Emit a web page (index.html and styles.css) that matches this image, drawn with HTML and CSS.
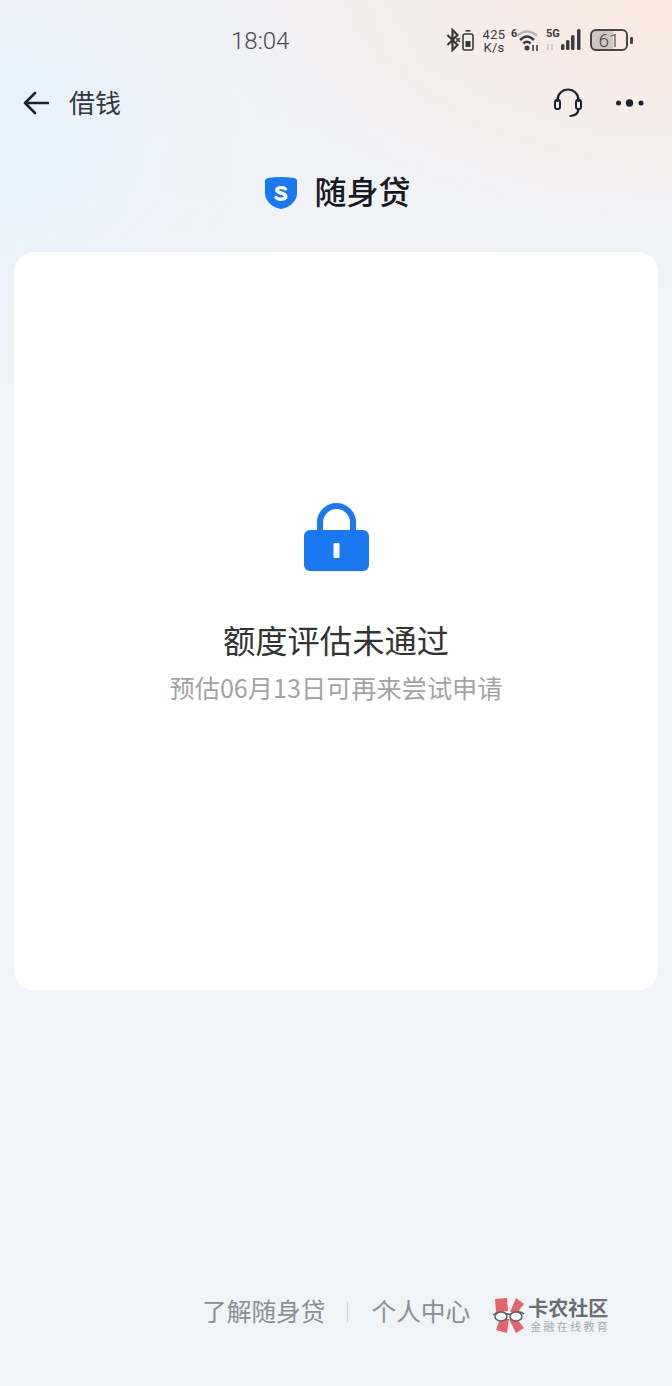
FILE: index.html
```html
<!DOCTYPE html>
<html lang="zh">
<head>
<meta charset="utf-8">
<title>借钱</title>
<link rel="stylesheet" href="styles.css">
</head>
<body>
<div class="page">
  <div class="status">
    <span class="time">18:04</span>
    <div class="status-icons">
      <svg class="ic-bt" width="28" height="24" viewBox="0 0 28 24"><path d="M1.500 7l10 10-5 5V2l5 5-10 10" fill="none" stroke="#3a3a3c" stroke-width="2.200"/><path d="M10 10l4 4M14 10l-4 4" stroke="#3a3a3c" stroke-width="1.500"/><rect x="17" y="6" width="10" height="16" rx="2" fill="none" stroke="#3a3a3c" stroke-width="1.600"/><rect x="19.500" y="2" width="5" height="1.600" fill="#3a3a3c"/><rect x="19.500" y="13" width="5" height="6" fill="#3a3a3c"/></svg>
      <div class="speed"><span>425</span><span>K/s</span></div>
      <span class="wifi-num">6</span>
      <svg class="ic-wifi" width="25" height="24" viewBox="0 0 25 24"><path d="M1 8Q11-1 21 8" fill="none" stroke="#b5b3b3" stroke-width="2.500"/><path d="M4 12Q11 5 18 12" fill="none" stroke="#3a3a3c" stroke-width="2.500"/><path d="M7.500 15.500Q11 12 14.500 15.500" fill="none" stroke="#3a3a3c" stroke-width="2.500"/><circle cx="11" cy="20" r="2.500" fill="#3a3a3c"/><path d="M17 17v6M21 17v6" stroke="#3a3a3c" stroke-width="1.500"/></svg>
      <div class="signal">
        <span class="five-g">5G</span>
        <svg class="ic-bars" width="36" height="24" viewBox="0 0 36 24"><path d="M2 16v6M6 16v6" stroke="#b5b3b3" stroke-width="1.200"/><rect x="15" y="16" width="3.500" height="6" rx="1.500" fill="#3a3a3c"/><rect x="20" y="12" width="3.500" height="10" rx="1.500" fill="#3a3a3c"/><rect x="25" y="7" width="3.500" height="15" rx="1.500" fill="#3a3a3c"/><rect x="31" y="1" width="3.500" height="21" rx="1.500" fill="#3a3a3c"/></svg>
      </div>
      <div class="battery"><div class="battery-body"><span>61</span></div><i class="battery-tip"></i></div>
    </div>
  </div>

  <div class="nav">
    <svg class="back" width="26" height="24" viewBox="0 0 26 24"><path d="M25 12H2M12 2L2 12l10 10" fill="none" stroke="#1c2230" stroke-width="2.600" stroke-linecap="round" stroke-linejoin="round"/></svg>
    <span class="nav-title">借钱</span>
    <svg class="headset" width="30" height="30" viewBox="0 0 30 30"><path d="M4.500 14V12a10.500 10.500 0 0 1 21 0v2" fill="none" stroke="#1c2230" stroke-width="2.200"/><rect x="2" y="12" width="5" height="9" rx="2" fill="none" stroke="#1c2230" stroke-width="2"/><rect x="23" y="12" width="5" height="9" rx="2" fill="none" stroke="#1c2230" stroke-width="2"/><path d="M25.500 21c0 4-3 6.500-8 7" fill="none" stroke="#1c2230" stroke-width="2.200" stroke-linecap="round"/></svg>
    <svg class="more" width="30" height="10" viewBox="0 0 30 10"><circle cx="3.500" cy="5" r="2.500" fill="#1c2230"/><circle cx="14.500" cy="5" r="3.700" fill="#1c2230"/><circle cx="26" cy="5" r="2.500" fill="#1c2230"/></svg>
  </div>

  <div class="brand">
    <svg class="shield" width="34" height="34" viewBox="0 0 34 34"><path d="M1 5Q1 2.500 4 2 17 0 30 2 33 2.500 33 5V17C33 26 25 31.500 17 33 9 31.500 1 26 1 17Z" fill="#1a78f2"/><path d="M21.500 13C20 11 13 11 12.800 14.200 12.600 17.500 22 16.500 21.800 20.500 21.500 24 14 23.800 12 21.500" fill="none" stroke="#fff" stroke-width="3.400" stroke-linecap="round"/></svg>
    <span class="brand-name">随身贷</span>
  </div>

  <main class="card">
    <svg class="lock" width="65" height="68" viewBox="0 0 65 68"><path d="M16 30V19.500a16.500 16.500 0 0 1 33 0V30" fill="none" stroke="#1a78f2" stroke-width="6"/><rect x="0" y="27" width="65" height="41" rx="6" fill="#1a78f2"/><rect x="29.500" y="40" width="6" height="15" rx="1" fill="#fff"/></svg>
    <h1 class="card-title">额度评估未通过</h1>
    <p class="card-sub">预估06月13日可再来尝试申请</p>
  </main>

  <footer class="footer">
    <span class="link">了解随身贷</span>
    <i class="divider"></i>
    <span class="link">个人中心</span>
    <div class="logo">
      <svg width="33" height="36" viewBox="0 0 33 36"><path d="M3 2 15 1 16 14 4 15Z" fill="#e4646c"/><path d="M18 15 24 1 32 7 25 16Z" fill="#e4646c"/><path d="M8 22H17L15 36 4 33Z" fill="#e4646c"/><path d="M17 22H25L32 31 24 36Z" fill="#e4646c"/><path d="M1 18Q7 13 14 16.500 17 18 20 16.500 27 13 32 17" fill="none" stroke="#5f6266" stroke-width="1.500"/><ellipse cx="9" cy="19.500" rx="6" ry="4.500" fill="#f6f6f8" stroke="#5f6266" stroke-width="1.500"/><ellipse cx="24" cy="19.500" rx="6" ry="4.500" fill="#f6f6f8" stroke="#5f6266" stroke-width="1.500"/></svg>
      <div class="logo-text"><b>卡农社区</b><small>金融在线教育</small></div>
    </div>
  </footer>
</div>
</body>
</html>
```
FILE: styles.css
```css
* { box-sizing: border-box; margin: 0; padding: 0; }
html, body { width: 672px; height: 1386px; overflow: hidden; }
body {
  font-family: "Noto Sans CJK SC", "Noto Sans", sans-serif;
  background: #f0f3f8;
}
.page {
  width: 672px;
  height: 1386px;
  display: flex;
  flex-direction: column;
  background:
    radial-gradient(420px 240px at 672px 0, #fbe9e0 0%, rgba(251,233,224,0) 100%),
    radial-gradient(300px 260px at 0 130px, #e6f3fd 0%, rgba(230,243,253,0) 100%),
    linear-gradient(180deg, #f1f0f3 0, #f0f3f8 300px);
}
.status {
  height: 80px;
  display: flex;
  align-items: center;
  padding-left: 231px;
  flex: none;
}
.time { font: 300 24px/30px Roboto, sans-serif; color: #4a4a4c; margin-top: 1px; }
.status-icons { margin-left: auto; display: flex; align-items: center; padding-right: 44px; color: #3a3a3c; }
.ic-bt { margin-right: 8px; }
.speed { display: flex; flex-direction: column; align-items: center; font: 13px/13px Roboto, sans-serif; letter-spacing: 0.3px; width: 24px; margin: 1px 5px 0 0; }
.wifi-num { font: 700 11px/12px Roboto, sans-serif; align-self: flex-start; width: 5px; margin-top: 1px; }
.ic-wifi { margin-right: 5px; }
.signal { position: relative; margin-right: 8px; width: 36px; height: 24px; }
.five-g { position: absolute; left: 0; top: 0; font: 700 11px/12px Roboto, sans-serif; }
.battery { display: flex; align-items: center; position: relative; }
.battery-body {
  width: 38px; height: 22px;
  border: 2px solid #4a4644; border-radius: 6px;
  background: linear-gradient(90deg, #cfc6c1 0 61%, transparent 61%);
  display: flex; align-items: center; justify-content: center;
  font: 300 19px/1 Roboto, sans-serif; color: #4a4644;
}
.battery-tip { position: absolute; right: -5px; width: 3px; height: 7px; background: #4a4644; border-radius: 1px; }
.nav {
  height: 46px;
  display: flex;
  align-items: center;
  padding: 0 27px 0 23px;
  flex: none;
}
.nav-title { margin: 0 0 2px 20px; font-size: 26px; line-height: 44px; color: #33363b; }
.headset { margin-left: auto; }
.more { margin-left: 32px; }
.brand {
  margin-top: 40px;
  height: 52px;
  display: flex;
  align-items: center;
  justify-content: center;
  gap: 16px;
  padding-left: 3px;
  flex: none;
}
.shield { margin-top: 2px; }
.brand-name { font-size: 32px; line-height: 48px; font-weight: 500; color: #17191c; margin-bottom: 4px; }
.card {
  margin: 34px 14px 0;
  height: 738px;
  background: #fff;
  border-radius: 20px;
  display: flex;
  flex-direction: column;
  align-items: center;
  padding-top: 251px;
  flex: none;
}
.card-title { margin-top: 44px; font-size: 32.300px; line-height: 48px; font-weight: 400; color: #333; }
.card-sub { margin-top: 6px; font-size: 25.200px; line-height: 36px; color: #a3a3a3; }
.footer {
  margin-top: auto;
  height: 98px;
  display: flex;
  align-items: flex-start;
  padding-left: 202px;
  flex: none;
}
.link { font-size: 24.700px; line-height: 44px; color: #8b8e93; }
.divider { width: 1px; height: 20px; margin: 14px 23px 0 22px; background: #cfd2d6; }
.logo { display: flex; align-items: flex-start; gap: 3px; margin-left: 22px; margin-top: 9px; }
.logo-text { display: flex; flex-direction: column; color: #6b6e72; }
.logo-text b { font-size: 20px; line-height: 22px; font-weight: 700; white-space: nowrap; }
.logo-text small { font-size: 11px; line-height: 14px; letter-spacing: 2.300px; margin-left: 2px; color: #a9acaf; white-space: nowrap; }
```
